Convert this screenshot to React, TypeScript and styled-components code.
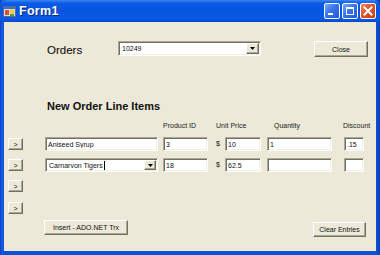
// Libs
import * as React from 'react'
import styled, { createGlobalStyle } from 'styled-components'

const GlobalStyle = createGlobalStyle`
  html, body {
    margin: 0;
    padding: 0;
    background: #0c52d6;
  }
  body {
    width: 380px;
    height: 255px;
    overflow: hidden;
    font-family: "Liberation Sans", Arial, sans-serif;
  }
`

interface Line {
  name: string
  combo?: boolean
  productId: string
  price: string
  quantity: string
  discount: string
}

const lines: Line[] = [
  { name: 'Aniseed Syrup', productId: '3', price: '10', quantity: '1', discount: '.15' },
  { name: 'Carnarvon Tigers', combo: true, productId: '18', price: '62.5', quantity: '', discount: '' },
]

function TitleIcon() {
  return (
    <svg width="13" height="13" viewBox="0 0 13 13">
      <rect x="0.5" y="1.5" width="12" height="10" fill="#d4dcec" stroke="#5a6a94" />
      <rect x="1" y="2" width="11" height="2" fill="#3a6fd0" />
      <rect x="2" y="5" width="4" height="5" fill="#e0502c" />
      <circle cx="9" cy="6.5" r="2.3" fill="#f6cf1e" />
      <rect x="7" y="9" width="4" height="2" fill="#48a040" />
    </svg>
  )
}

function CaptionGlyph({ kind }: { kind: 'min' | 'max' | 'close' }) {
  if (kind === 'min') {
    return (
      <svg width="10" height="10" viewBox="0 0 10 10">
        <rect x="1" y="7" width="5" height="2" fill="#fff" />
      </svg>
    )
  }
  if (kind === 'max') {
    return (
      <svg width="10" height="10" viewBox="0 0 10 10">
        <rect x="1.5" y="1.5" width="7" height="7" fill="none" stroke="#fff" />
        <rect x="1" y="1" width="8" height="2" fill="#fff" />
      </svg>
    )
  }
  return (
    <svg width="10" height="10" viewBox="0 0 10 10">
      <path d="M1.5 1.5 L8.5 8.5 M8.5 1.5 L1.5 8.5" stroke="#fff" strokeWidth="2" strokeLinecap="square" />
    </svg>
  )
}

function DropArrow({ w }: { w: number }) {
  return (
    <ArrowBox $w={w}>
      <svg width="5" height="3" viewBox="0 0 5 3">
        <path d="M0 0 H5 L2.5 3 Z" fill="#000" />
      </svg>
    </ArrowBox>
  )
}

export default function App() {
  return (
    <>
      <GlobalStyle />
      <Window>
        <TitleBar>
          <TitleIcon />
          <Caption>Form1</Caption>
          <CaptionButtons>
            <CaptionButton>
              <CaptionGlyph kind="min" />
            </CaptionButton>
            <CaptionButton>
              <CaptionGlyph kind="max" />
            </CaptionButton>
            <CaptionButton $close>
              <CaptionGlyph kind="close" />
            </CaptionButton>
          </CaptionButtons>
        </TitleBar>

        <Client>
          <OrdersRow>
            <OrdersLabel>Orders</OrdersLabel>
            <Combo $w={143} $h={15}>
              <ComboText>10249</ComboText>
              <DropArrow w={13} />
            </Combo>
            <Button $w={54} $h={16} $ml={53}>
              Close
            </Button>
          </OrdersRow>

          <Heading>New Order Line Items</Heading>

          <LineGrid>
            <span />
            <span />
            <ColHeader>Product ID</ColHeader>
            <ColHeader>Unit Price</ColHeader>
            <ColHeader $pl={7}>Quantity</ColHeader>
            <ColHeader $ml={-1}>Discount</ColHeader>

            {lines.map((line) => (
              <React.Fragment key={line.name}>
                <RowButton>&gt;</RowButton>
                {line.combo ? (
                  <Combo $w={113} $h={14}>
                    <ComboText>
                      {line.name}
                      <Caret />
                    </ComboText>
                    <DropArrow w={12} />
                  </Combo>
                ) : (
                  <TextBox $w={113} readOnly value={line.name} />
                )}
                <TextBox $w={45} readOnly value={line.productId} />
                <PriceCell>
                  <Dollar>$</Dollar>
                  <TextBox $w={36} readOnly value={line.price} />
                </PriceCell>
                <TextBox $w={65} readOnly value={line.quantity} />
                <TextBox $w={20} readOnly value={line.discount} />
              </React.Fragment>
            ))}

            <RowButton>&gt;</RowButton>
            <Spacer />
            <RowButton>&gt;</RowButton>
            <Spacer />
          </LineGrid>

          <Footer>
            <Button $w={84} $h={15} $mb={2}>
              Insert - ADO.NET Trx
            </Button>
            <Button $w={53} $h={15}>
              Clear Entries
            </Button>
          </Footer>
        </Client>
      </Window>
    </>
  )
}

////
// Styles
///

const Window = styled.div`
  width: 380px;
  height: 255px;
  display: flex;
  flex-direction: column;
  background: linear-gradient(to right, #0a3fc4 0, #1a5ee0 2px, #0c52d6 4px, #0c52d6 376px, #0a3fb8 380px);
`

const TitleBar = styled.div`
  height: 22px;
  flex: none;
  display: flex;
  align-items: center;
  padding: 0 4px 0 3px;
  box-sizing: border-box;
  background: linear-gradient(
    to bottom,
    #3c87f2 0,
    #0d5ce6 3px,
    #0654df 45%,
    #085be6 85%,
    #0449cc 100%
  );
  border-radius: 6px 6px 0 0;
`

const Caption = styled.span`
  margin-left: 3px;
  color: #fff;
  font-family: "Liberation Sans", Arial, sans-serif;
  font-weight: bold;
  font-size: 12.5px;
  letter-spacing: 0.3px;
  text-shadow: 1px 1px 0 #0a2a80;
  flex: 1;
`

const CaptionButtons = styled.div`
  display: flex;
  gap: 2px;
`

const CaptionButton = styled.div<{ $close?: boolean }>`
  width: 16px;
  height: 16px;
  box-sizing: border-box;
  border: 1px solid #fff;
  border-radius: 2px;
  display: flex;
  align-items: center;
  justify-content: center;
  background: ${(p) =>
    p.$close
      ? 'linear-gradient(135deg, #f08a6a 0%, #e0522e 45%, #c8401c 100%)'
      : 'linear-gradient(135deg, #7fa8f6 0%, #3a74ee 45%, #2358d8 100%)'};
`

const Client = styled.div`
  flex: 1;
  margin: 0 4px 4px 4px;
  background: #ece9d8;
  display: flex;
  flex-direction: column;
  overflow: hidden;
  padding-top: 19px;
`

const OrdersRow = styled.div`
  display: flex;
  align-items: flex-start;
  padding-left: 43px;
  height: 16px;
`

const OrdersLabel = styled.div`
  width: 71px;
  font-size: 11.5px;
  line-height: 16px;
  margin-top: 1px;
  color: #111;
  -webkit-text-stroke: 0.1px #111;
`

const Heading = styled.div`
  margin-top: 43px;
  padding-left: 43px;
  font-size: 11px;
  font-weight: bold;
  line-height: 13px;
  color: #111;
`

const LineGrid = styled.div`
  margin-top: 8px;
  padding-left: 4px;
  display: grid;
  grid-template-columns: 37px 118px 53px 51px 77px 1fr;
  grid-template-rows: 16px 21px 21px 22px 13px;
  align-items: start;
`

const ColHeader = styled.div<{ $pl?: number; $ml?: number }>`
  font-size: 7px;
  line-height: 9px;
  color: #222;
  padding-left: ${(p) => p.$pl ?? 0}px;
  margin-left: ${(p) => p.$ml ?? 0}px;
  white-space: nowrap;
`

const TextBox = styled.input<{ $w: number }>`
  width: ${(p) => p.$w}px;
  height: 14px;
  box-sizing: border-box;
  margin: 0;
  padding: 0 0 0 2px;
  background: #fff;
  border: 1px solid;
  border-color: #aca899 #fff #fff #aca899;
  box-shadow: inset 1px 1px 0 #716f64, inset -1px -1px 0 #f1efe2;
  font-family: "Liberation Sans", Arial, sans-serif;
  font-size: 7px;
  color: #111;
  outline: none;
`

const Combo = styled.div<{ $w: number; $h: number }>`
  width: ${(p) => p.$w}px;
  height: ${(p) => p.$h}px;
  box-sizing: border-box;
  background: #fff;
  border: 1px solid;
  border-color: #aca899 #fff #fff #aca899;
  box-shadow: inset 1px 1px 0 #716f64, inset -1px -1px 0 #f1efe2;
  display: flex;
  align-items: stretch;
  padding: 1px;
`

const ComboText = styled.div`
  flex: 1;
  display: flex;
  align-items: center;
  padding-left: 2px;
  font-size: 7px;
  color: #111;
  white-space: nowrap;
`

const Caret = styled.span`
  display: inline-block;
  width: 1px;
  height: 9px;
  background: #000;
  margin-left: 1px;
`

const ArrowBox = styled.div<{ $w: number }>`
  width: ${(p) => p.$w}px;
  box-sizing: border-box;
  display: flex;
  align-items: center;
  justify-content: center;
  background: #ece9d8;
  border: 1px solid;
  border-color: #fff #716f64 #716f64 #fff;
  box-shadow: inset -1px -1px 0 #aca899;
`

const Button = styled.div<{ $w: number; $h: number; $ml?: number; $mb?: number }>`
  width: ${(p) => p.$w}px;
  height: ${(p) => p.$h}px;
  margin-left: ${(p) => p.$ml ?? 0}px;
  margin-bottom: ${(p) => p.$mb ?? 0}px;
  box-sizing: border-box;
  display: flex;
  align-items: center;
  justify-content: center;
  background: #ece9d8;
  border: 1px solid;
  border-color: #fff #716f64 #716f64 #fff;
  box-shadow: inset -1px -1px 0 #aca899;
  font-size: 7px;
  color: #111;
  white-space: nowrap;
`

const RowButton = styled.div`
  width: 15px;
  height: 12px;
  margin-top: 1px;
  box-sizing: border-box;
  display: flex;
  align-items: center;
  justify-content: center;
  background: #ece9d8;
  border: 1px solid;
  border-color: #fff #716f64 #716f64 #fff;
  box-shadow: inset -1px -1px 0 #aca899;
  font-size: 7px;
  line-height: 7px;
  color: #111;
`

const Spacer = styled.div`
  grid-column: 2 / -1;
`

const PriceCell = styled.div`
  display: flex;
  align-items: center;
  height: 14px;
`

const Dollar = styled.span`
  width: 9px;
  font-size: 7px;
  line-height: 10px;
  color: #111;
`

const Footer = styled.div`
  margin-top: auto;
  padding: 0 10px 14px 40px;
  display: flex;
  justify-content: space-between;
  align-items: flex-end;
`
